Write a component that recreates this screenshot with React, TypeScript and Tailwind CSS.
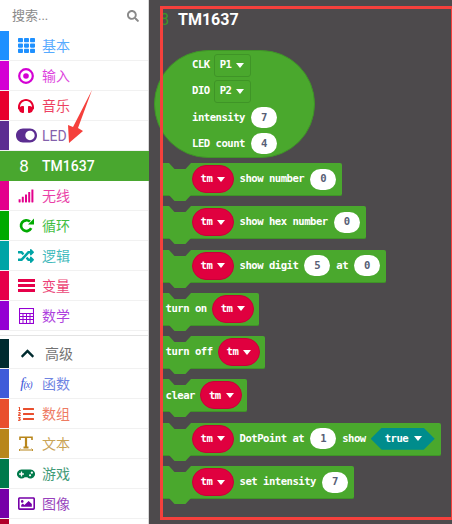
import type { ReactNode } from 'react';
import {
  FaChevronUp,
  FaGamepad,
  FaHeadphones,
  FaListOl,
  FaRandom,
  FaRegImage,
  FaSearch,
  FaSignal,
  FaTh,
  FaToggleOn,
} from 'react-icons/fa';

const TargetIcon = () => (
  <svg width="16" height="16" viewBox="0 0 16 16" fill="none" stroke="currentColor">
    <circle cx="8" cy="8" r="6.8" strokeWidth="2.2" />
    <circle cx="8" cy="8" r="2.8" fill="currentColor" stroke="none" />
  </svg>
);

const LoopIcon = () => (
  <svg width="15" height="15" viewBox="0 0 15 15" fill="none" stroke="currentColor">
    <path d="M12.2 10.2A5.4 5.4 0 1 1 11 3.6" strokeWidth="2.7" />
    <path d="M9 6.4h6V0.4z" fill="currentColor" stroke="none" />
  </svg>
);

const VariablesIcon = () => (
  <svg width="17" height="13" viewBox="0 0 17 13" fill="currentColor">
    <rect y="0" width="17" height="3" />
    <rect y="5" width="17" height="3" />
    <rect y="10" width="17" height="3" />
  </svg>
);

const CalculatorIcon = () => (
  <svg width="15" height="16" viewBox="0 0 15 16" fill="none" stroke="currentColor" strokeWidth="1">
    <rect x="0.5" y="0.5" width="14" height="15" strokeWidth="1.1" />
    <path d="M0.5 5.5h14M0.5 8.5h14M0.5 11.5h14M4 5.5v10M7.5 5.5v10M11 5.5v10" />
  </svg>
);

const TextIcon = () => (
  <svg width="16" height="15" viewBox="0 0 16 15" fill="none" stroke="currentColor">
    <path d="M2 4V1.2h12V4" strokeWidth="1.6" />
    <path d="M8 1.5v10M5.5 11.5h5" strokeWidth="2.2" />
    <path d="M1 14h14" strokeWidth="1" />
    <path d="M2.5 12.5 1 14l1.5 1.5M13.5 12.5 15 14l-1.5 1.5" strokeWidth="0.8" />
  </svg>
);

const FunctionIcon = () => (
  <span className="font-['Liberation_Serif',serif] italic text-[15px] leading-none tracking-[-1px]">
    f<span className="text-[10px]">(x)</span>
  </span>
);

type Category = { label: string; color: string; icon: ReactNode };

const basics: Category[] = [
  { label: '基本', color: '#1e90ff', icon: <FaTh size={17} /> },
  { label: '输入', color: '#d400d4', icon: <TargetIcon /> },
  { label: '音乐', color: '#e8002e', icon: <FaHeadphones size={16} /> },
  { label: 'LED', color: '#5c2d91', icon: <FaToggleOn size={21} /> },
];

const radioAndLogic: Category[] = [
  { label: '无线', color: '#e3008c', icon: <FaSignal size={16} /> },
  { label: '循环', color: '#00aa00', icon: <LoopIcon /> },
  { label: '逻辑', color: '#00a4a6', icon: <FaRandom size={16} /> },
  { label: '变量', color: '#e6004a', icon: <VariablesIcon /> },
  { label: '数学', color: '#9400d3', icon: <CalculatorIcon /> },
];

const advanced: Category[] = [
  { label: '函数', color: '#3f5bd9', icon: <FunctionIcon /> },
  { label: '数组', color: '#e94f2e', icon: <FaListOl size={16} /> },
  { label: '文本', color: '#b8861b', icon: <TextIcon /> },
  { label: '游戏', color: '#007a4b', icon: <FaGamepad size={18} /> },
  { label: '图像', color: '#7600a8', icon: <FaRegImage size={17} /> },
];

function CategoryRow({ item }: { item: Category }) {
  return (
    <div className="flex h-[30px] items-center border-b border-[#f1f1f1]" style={{ color: item.color }}>
      <div className="h-full w-[9px] shrink-0" style={{ backgroundColor: item.color }} />
      <div className="flex w-[33px] shrink-0 items-center justify-center pl-[1px]">{item.icon}</div>
      <span className="text-sm leading-none opacity-75">{item.label}</span>
    </div>
  );
}

function Caret({ className = 'text-white' }: { className?: string }) {
  return (
    <svg width="8" height="5" viewBox="0 0 8 5" className={className} fill="currentColor">
      <path d="M0 0h8L4 5z" />
    </svg>
  );
}

function NumberInput({ value }: { value: string }) {
  return (
    <span className="flex h-[21px] w-[26px] shrink-0 items-center justify-center rounded-full bg-white text-[#575e75]">
      {value}
    </span>
  );
}

function TmPill() {
  return (
    <span className="flex h-[28px] w-[42px] shrink-0 items-center gap-[5px] rounded-full border border-[#c80038] bg-[#e0003f] pl-[8px] text-white">
      tm
      <Caret />
    </span>
  );
}

function PinSelect({ label }: { label: string }) {
  return (
    <span className="flex h-[23px] w-[37px] items-center gap-[5px] rounded-[3px] border border-[#3f9427] pl-[5px]">
      {label}
      <Caret />
    </span>
  );
}

function ConnectorShape({ className, color }: { className: string; color: string }) {
  return (
    <svg width="22" height="6" viewBox="0 0 22 6" className={`absolute left-[9px] ${className}`} fill={color}>
      <path d="M0 0h22l-5.5 6h-11z" />
    </svg>
  );
}

function Block({ indent = false, children }: { indent?: boolean; children: ReactNode }) {
  return (
    <div
      className={`relative flex h-[33px] w-fit items-center rounded-[2px] border-b border-[#3f9427] bg-[#4aa82d] ${
        indent ? 'gap-[6px] pl-[32px] pr-[6px]' : 'gap-[5px] pl-[6px] pr-[5px]'
      }`}
    >
      <ConnectorShape className="top-0" color="#4d4a4c" />
      <ConnectorShape className="top-full" color="#4aa82d" />
      {children}
    </div>
  );
}

function HatRow({ children, gap = 'gap-[6px]' }: { children: ReactNode; gap?: string }) {
  return <div className={`flex h-[27px] items-center ${gap}`}>{children}</div>;
}

export default function App() {
  return (
    <div className="relative flex h-[524px] w-[452px] overflow-hidden bg-white font-['Roboto','Noto_Sans_CJK_SC',sans-serif]">
      <aside className="w-[149px] shrink-0 border-r border-[#d8d8d8]">
        <div className="flex h-[31px] items-center justify-between pl-[12px] pr-[9px] text-[#8a8a8a]">
          <span className="text-[13px] leading-none">搜索...</span>
          <FaSearch size={12} />
        </div>
        {basics.map((item) => (
          <CategoryRow key={item.label} item={item} />
        ))}
        <div className="-mr-px flex h-[30px] items-center bg-[#49a72f] text-white">
          <span className="w-[42px] pl-[6px] text-center text-[17px] leading-none">8</span>
          <span className="text-sm font-medium leading-none">TM1637</span>
        </div>
        {radioAndLogic.map((item) => (
          <CategoryRow key={item.label} item={item} />
        ))}
        <div className="mb-[3px] mt-[4px] h-[1px] bg-[#e3e3e3]" />
        <div className="flex h-[30px] items-center border-b border-[#f1f1f1] text-[#444]">
          <div className="h-full w-[9px] shrink-0 bg-[#002b2f]" />
          <div className="flex w-[36px] shrink-0 items-center justify-center text-[#002b2f]">
            <FaChevronUp size={15} />
          </div>
          <span className="text-sm leading-none opacity-75">高级</span>
        </div>
        {advanced.map((item) => (
          <CategoryRow key={item.label} item={item} />
        ))}
        <div className="h-[5px] w-[9px] bg-[#b0002a]" />
      </aside>

      <main className="relative flex-1 bg-[#4d4a4c] pl-[5px] font-['DejaVu_Sans_Mono',monospace] text-[10.6px] font-bold tracking-[-0.5px] text-white">
        <div className="flex h-[50px] items-start pt-[11px] font-['Roboto',sans-serif] text-base font-bold leading-[18px] tracking-normal">
          <span className="ml-[6px] w-[18px] font-normal text-[#3f9427]">8</span>
          <span>TM1637</span>
        </div>

        <div className="flex h-[108px] w-[161px] flex-col rounded-[54px] border border-[#3f9427] bg-[#4aa82d] pl-[37px] pt-[1px]">
          <HatRow gap="gap-[4px]">
            CLK
            <PinSelect label="P1" />
          </HatRow>
          <HatRow gap="gap-[4px]">
            DIO
            <PinSelect label="P2" />
          </HatRow>
          <HatRow>
            intensity
            <NumberInput value="7" />
          </HatRow>
          <HatRow>
            LED count
            <NumberInput value="4" />
          </HatRow>
        </div>

        <div className="ml-[5.5px] mt-[5px] flex flex-col gap-[10.3px]">
          <Block indent>
            <TmPill />
            show number
            <NumberInput value="0" />
          </Block>
          <Block indent>
            <TmPill />
            show hex number
            <NumberInput value="0" />
          </Block>
          <Block indent>
            <TmPill />
            show digit
            <NumberInput value="5" />
            at
            <NumberInput value="0" />
          </Block>
          <Block>
            turn on
            <TmPill />
          </Block>
          <Block>
            turn off
            <TmPill />
          </Block>
          <Block>
            clear
            <TmPill />
          </Block>
          <Block indent>
            <TmPill />
            DotPoint at
            <NumberInput value="1" />
            show
            <span className="-ml-[1px] flex h-[22px] w-[64px] items-center gap-[6px] bg-[#008c8c] pl-[14px] [clip-path:polygon(11px_0,53px_0,100%_50%,53px_100%,11px_100%,0_50%)]">
              true
              <Caret />
            </span>
          </Block>
          <Block indent>
            <TmPill />
            set intensity
            <NumberInput value="7" />
          </Block>
        </div>

        {/* annotation frame from the screenshot */}
        <div className="pointer-events-none absolute bottom-[4px] left-[11px] right-0 top-[6px] border-[3px] border-r-[1px] border-[#f5403c]" />
      </main>

      {/* annotation arrow pointing at the LED row */}
      <svg className="pointer-events-none absolute left-[60px] top-[85px]" width="40" height="62" viewBox="60 85 40 62">
        <polygon points="92,90 78,128 83,131 69,143 68,125 73,127" fill="#f5403c" />
      </svg>
    </div>
  );
}
